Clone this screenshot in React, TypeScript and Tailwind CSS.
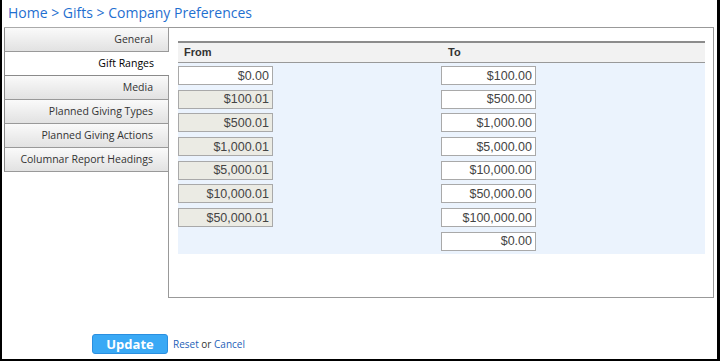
import React from "react";

const tabs = [
	"General",
	"Gift Ranges",
	"Media",
	"Planned Giving Types",
	"Planned Giving Actions",
	"Columnar Report Headings",
];

const ranges: { from?: string; to: string }[] = [
	{ from: "$0.00", to: "$100.00" },
	{ from: "$100.01", to: "$500.00" },
	{ from: "$500.01", to: "$1,000.00" },
	{ from: "$1,000.01", to: "$5,000.00" },
	{ from: "$5,000.01", to: "$10,000.00" },
	{ from: "$10,000.01", to: "$50,000.00" },
	{ from: "$50,000.01", to: "$100,000.00" },
	{ to: "$0.00" },
];

const AmountBox = ({ value, disabled }: { value: string; disabled?: boolean }) => (
	<input
		readOnly
		value={value}
		className={
			"block h-[19px] w-[95px] border border-[#a9a9a9] pr-[3px] text-right text-[12.5px] text-[#444] outline-none font-['Liberation_Sans',Arial,sans-serif] " +
			(disabled ? "bg-[#ebebe4]" : "bg-white")
		}
	/>
);

export default function App() {
	return (
		<div className="box-border h-[361px] w-[720px] overflow-hidden border-b-2 border-l-2 border-r-[3px] border-black bg-white font-['Open_Sans',sans-serif]">
			<div className="h-[27px] pl-[6px] pt-[3px] text-[14px] leading-[20px] text-[#1f6fd0]">
				Home &gt; Gifts &gt; Company Preferences
			</div>

			<div className="ml-[2px] flex">
				<div className="w-[164px] border-t border-[#aaa]">
					{tabs.map((t) => {
						const active = t === "Gift Ranges";
						return (
							<div
								key={t}
								className={
									"relative box-border flex h-[24px] items-center justify-end border-b border-l border-[#8a8a8a] pr-[15px] text-[10.5px] " +
									(active
										? "z-10 -mr-px bg-white text-black"
										: "border-b-[#999] bg-gradient-to-b from-[#fafafa] to-[#e2e2e2] text-[#333]")
								}
							>
								{t}
							</div>
						);
					})}
				</div>

				<div className="box-border h-[271px] w-[546px] border border-[#999] pl-[9px] pr-[8px] pt-[13px]">
					<div className="grid h-[22px] grid-cols-[263px_1fr] items-center border-b border-t-2 border-b-[#999] border-t-[#8c8c8c] bg-[#f2f2f2] text-[11px] font-bold text-[#333] font-['Liberation_Sans',Arial,sans-serif]">
						<div className="pl-[6px]">From</div>
						<div className="pl-[7px]">To</div>
					</div>
					<div className="bg-[#ebf3fd] pb-[1px]">
						{ranges.map((r, i) => (
							<div key={i} className="grid h-[23.7px] grid-cols-[263px_1fr] pt-[3px]">
								<div>{r.from && <AmountBox value={r.from} disabled={i > 0} />}</div>
								<div>
									<AmountBox value={r.to} />
								</div>
							</div>
						))}
					</div>
				</div>
			</div>

			<div className="ml-[90px] mt-[36px] flex items-center gap-[5px]">
				<button className="h-[20px] w-[76px] rounded-[3px] border border-[#2a8fe0] bg-[#3aa9f5] text-[13px] font-bold leading-none text-white">
					Update
				</button>
				<span className="text-[10px] text-[#333]">
					<span className="text-[#1d5fb8]">Reset</span> or{" "}
					<span className="text-[#1d5fb8]">Cancel</span>
				</span>
			</div>
		</div>
	);
}
